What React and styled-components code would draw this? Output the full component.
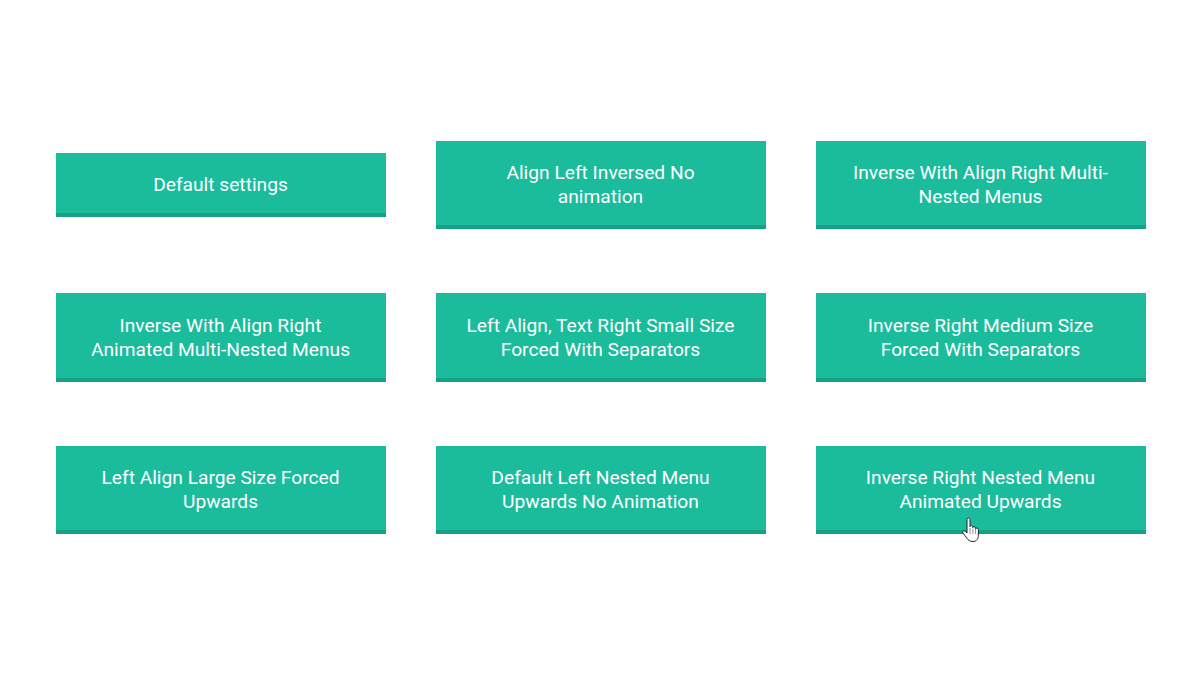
import React from 'react'
import styled, { createGlobalStyle } from 'styled-components'

const GlobalStyle = createGlobalStyle`
  html, body {
    margin: 0;
    padding: 0;
    background: #fefefe;
    font-family: Roboto, "Liberation Sans", sans-serif;
  }
`

const Page = styled.main`
  position: relative;
  box-sizing: border-box;
  width: 1200px;
  height: 680px;
  padding: 140.6px 54px 0 56px;
  overflow: hidden;
`

const Grid = styled.div`
  display: grid;
  grid-template-columns: repeat(3, 330px);
  grid-auto-rows: 88.8px;
  column-gap: 50px;
  row-gap: 63.7px;
  align-items: center;
`

const MenuButton = styled.button`
  box-sizing: border-box;
  width: 330px;
  height: ${props => (props.$single ? '64px' : '100%')};
  padding: 4.6px 31px 0 30px;
  border: 0;
  border-bottom: 4px solid #16a085;
  border-radius: 0;
  background: #1abc9c;
  color: #fff;
  font-family: inherit;
  font-size: 19.2px;
  line-height: 24px;
  text-align: center;
`

const Cursor = styled.svg`
  position: absolute;
  left: 962px;
  top: 517px;
  width: 18px;
  height: 25px;
`

const labels = [
  'Default settings',
  'Align Left Inversed No animation',
  'Inverse With Align Right Multi-Nested Menus',
  'Inverse With Align Right Animated Multi-Nested Menus',
  'Left Align, Text Right Small Size Forced With Separators',
  'Inverse Right Medium Size Forced With Separators',
  'Left Align Large Size Forced Upwards',
  'Default Left Nested Menu Upwards No Animation',
  'Inverse Right Nested Menu Animated Upwards',
]

const App = () => (
  <Page>
    <GlobalStyle />
    <Grid>
      {labels.map((label, i) => (
        <MenuButton key={label} $single={i === 0}>{label}</MenuButton>
      ))}
    </Grid>
    <Cursor viewBox="0 0 18 25">
      <path
        d="M5 2.4c0-1.9 3-1.9 3 0v7.2c.3-1.4 2.8-1.3 2.8.3v.6c.4-1.2 2.7-1.1 2.7.5v.7c.5-1 2.9-.8 2.9.9v6c0 2.6-1.6 5.9-5.4 5.9-3.2 0-4.7-1.3-6.4-3.7L.9 15.9c-.9-1.5.9-2.8 2.2-1.7L5 16z"
        fill="#fff"
        stroke="#1c2230"
        strokeWidth="1"
        strokeLinejoin="round"
      />
      <path d="M8 11v6M10.9 11.5v5.5M13.6 12v5" stroke="#6b7078" strokeWidth="0.8" fill="none" />
    </Cursor>
  </Page>
)

export default App
